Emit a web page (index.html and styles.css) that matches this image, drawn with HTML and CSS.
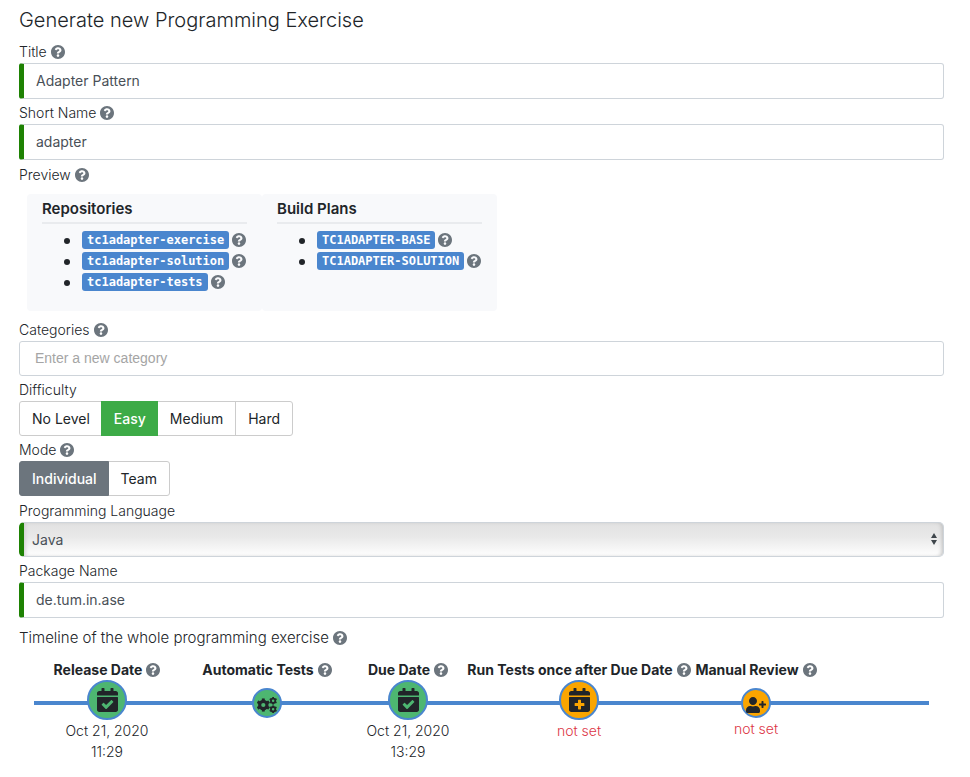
FILE: index.html
```html
<!DOCTYPE html>
<html lang="en">
<head>
<meta charset="utf-8">
<meta name="viewport" content="width=device-width, initial-scale=1">
<title>Generate new Programming Exercise</title>
<link rel="stylesheet" href="styles.css">
</head>
<body>
<svg class="sprite" aria-hidden="true">
  <symbol id="help" viewBox="8 8 496 496"><path d="M504 256c0 136.997-111.043 248-248 248S8 392.997 8 256C8 119.083 119.043 8 256 8s248 111.083 248 248zM262.655 90c-54.497 0-89.255 22.957-116.549 63.758-3.536 5.286-2.353 12.415 2.715 16.258l34.699 26.31c5.205 3.947 12.621 3.008 16.665-2.122 17.864-22.658 30.113-35.797 57.303-35.797 20.429 0 45.698 13.148 45.698 32.958 0 14.976-12.363 22.667-32.534 33.976C247.128 238.528 216 254.941 216 296v4c0 6.627 5.373 12 12 12h56c6.627 0 12-5.373 12-12v-1.333c0-28.462 83.186-29.647 83.186-106.667 0-58.002-60.165-102-116.531-102zM256 338c-25.365 0-46 20.635-46 46 0 25.364 20.635 46 46 46s46-20.636 46-46c0-25.365-20.635-46-46-46z"/></symbol>
  <symbol id="calendar-check" viewBox="0 0 448 512"><path d="M436 160H12c-6.627 0-12-5.373-12-12v-36c0-26.51 21.49-48 48-48h48V12c0-6.627 5.373-12 12-12h40c6.627 0 12 5.373 12 12v52h128V12c0-6.627 5.373-12 12-12h40c6.627 0 12 5.373 12 12v52h48c26.51 0 48 21.49 48 48v36c0 6.627-5.373 12-12 12zM12 192h424c6.627 0 12 5.373 12 12v260c0 26.51-21.49 48-48 48H48c-26.51 0-48-21.49-48-48V204c0-6.627 5.373-12 12-12zm333.296 95.947l-28.169-28.398c-4.667-4.705-12.265-4.736-16.97-.068L194.12 364.665l-45.98-46.352c-4.667-4.705-12.266-4.736-16.971-.068l-28.397 28.17c-4.705 4.667-4.736 12.265-.068 16.97l82.601 83.269c4.667 4.705 12.265 4.736 16.97.068l142.953-141.805c4.705-4.667 4.736-12.265.068-16.97z"/></symbol>
  <symbol id="calendar-plus" viewBox="0 0 448 512"><path fill-rule="evenodd" d="M436 160H12c-6.627 0-12-5.373-12-12v-36c0-26.51 21.49-48 48-48h48V12c0-6.627 5.373-12 12-12h40c6.627 0 12 5.373 12 12v52h128V12c0-6.627 5.373-12 12-12h40c6.627 0 12 5.373 12 12v52h48c26.51 0 48 21.49 48 48v36c0 6.627-5.373 12-12 12zM12 192h424c6.627 0 12 5.373 12 12v260c0 26.51-21.49 48-48 48H48c-26.51 0-48-21.49-48-48V204c0-6.627 5.373-12 12-12zm316 140c0-6.6-5.4-12-12-12h-60v-60c0-6.6-5.4-12-12-12h-40c-6.6 0-12 5.4-12 12v60h-60c-6.6 0-12 5.4-12 12v40c0 6.6 5.4 12 12 12h60v60c0 6.6 5.4 12 12 12h40c6.6 0 12-5.4 12-12v-60h60c6.6 0 12-5.4 12-12z"/></symbol>
  <symbol id="user-plus" viewBox="0 0 640 512"><path d="M624 208h-64v-64c0-8.8-7.2-16-16-16h-32c-8.8 0-16 7.2-16 16v64h-64c-8.8 0-16 7.2-16 16v32c0 8.8 7.2 16 16 16h64v64c0 8.8 7.2 16 16 16h32c8.8 0 16-7.2 16-16v-64h64c8.8 0 16-7.2 16-16v-32c0-8.8-7.2-16-16-16zm-400 48c70.7 0 128-57.3 128-128S294.7 0 224 0 96 57.3 96 128s57.3 128 128 128zm89.6 32h-16.7c-22.2 10.2-46.9 16-72.9 16s-50.6-5.8-72.9-16h-16.7C60.2 288 0 348.2 0 422.4V464c0 26.5 21.5 48 48 48h352c26.5 0 48-21.5 48-48v-41.6c0-74.2-60.2-134.4-134.4-134.4z"/></symbol>
  <symbol id="gear" viewBox="-100 -100 200 200">
    <circle r="54" fill="none" stroke="currentColor" stroke-width="46"/>
    <g fill="currentColor">
      <rect x="-22" y="-98" width="44" height="36" rx="6"/>
      <rect x="-22" y="-98" width="44" height="36" rx="6" transform="rotate(60)"/>
      <rect x="-22" y="-98" width="44" height="36" rx="6" transform="rotate(120)"/>
      <rect x="-22" y="-98" width="44" height="36" rx="6" transform="rotate(180)"/>
      <rect x="-22" y="-98" width="44" height="36" rx="6" transform="rotate(240)"/>
      <rect x="-22" y="-98" width="44" height="36" rx="6" transform="rotate(300)"/>
    </g>
  </symbol>
  <symbol id="cogs" viewBox="0 0 640 512">
    <use href="#gear" x="-16" y="38" width="436" height="436"/>
    <use href="#gear" x="388" y="-6" width="256" height="256"/>
    <use href="#gear" x="388" y="262" width="256" height="256"/>
  </symbol>
</svg>

<main class="page">
  <h1 class="heading">Generate new Programming Exercise</h1>
  <form>
    <div class="group">
      <div class="caption"><label for="title">Title</label><svg class="help" role="img" aria-label="Help"><use href="#help"/></svg></div>
      <input class="control valid" id="title" type="text" value="Adapter Pattern">
    </div>
    <div class="group">
      <div class="caption"><label for="short-name">Short Name</label><svg class="help" role="img" aria-label="Help"><use href="#help"/></svg></div>
      <input class="control valid" id="short-name" type="text" value="adapter">
    </div>
    <section class="group spaced">
      <div class="caption"><span>Preview</span><svg class="help" role="img" aria-label="Help"><use href="#help"/></svg></div>
      <div class="preview">
        <div class="card">
          <h2 class="card-title">Repositories</h2>
          <ul class="items">
            <li><span class="item"><code class="chip">tc1adapter-exercise</code><svg class="help" role="img" aria-label="Help"><use href="#help"/></svg></span></li>
            <li><span class="item"><code class="chip">tc1adapter-solution</code><svg class="help" role="img" aria-label="Help"><use href="#help"/></svg></span></li>
            <li><span class="item"><code class="chip">tc1adapter-tests</code><svg class="help" role="img" aria-label="Help"><use href="#help"/></svg></span></li>
          </ul>
        </div>
        <div class="card">
          <h2 class="card-title">Build Plans</h2>
          <ul class="items">
            <li><span class="item"><code class="chip">TC1ADAPTER-BASE</code><svg class="help" role="img" aria-label="Help"><use href="#help"/></svg></span></li>
            <li><span class="item"><code class="chip">TC1ADAPTER-SOLUTION</code><svg class="help" role="img" aria-label="Help"><use href="#help"/></svg></span></li>
          </ul>
        </div>
      </div>
    </section>
    <div class="group">
      <div class="caption"><label for="categories">Categories</label><svg class="help" role="img" aria-label="Help"><use href="#help"/></svg></div>
      <input class="control plain" id="categories" type="text" placeholder="Enter a new category">
    </div>
    <div class="group" role="radiogroup" aria-labelledby="difficulty">
      <div class="caption"><span id="difficulty">Difficulty</span></div>
      <div class="segments easy">
        <label class="segment"><input type="radio" name="difficulty">No Level</label>
        <label class="segment"><input type="radio" name="difficulty" checked>Easy</label>
        <label class="segment"><input type="radio" name="difficulty">Medium</label>
        <label class="segment"><input type="radio" name="difficulty">Hard</label>
      </div>
    </div>
    <div class="group" role="radiogroup" aria-labelledby="mode">
      <div class="caption"><span id="mode">Mode</span><svg class="help" role="img" aria-label="Help"><use href="#help"/></svg></div>
      <div class="segments">
        <label class="segment"><input type="radio" name="mode" checked>Individual</label>
        <label class="segment"><input type="radio" name="mode">Team</label>
      </div>
    </div>
    <div class="group spaced">
      <div class="caption"><label for="language">Programming Language</label></div>
      <div class="select-wrap">
        <select class="control valid select" id="language"><option>Java</option></select>
        <svg class="arrows" viewBox="0 0 8 14" aria-hidden="true"><path d="M1 6l3-5 3 5zM1 8l3 5 3-5z"/></svg>
      </div>
    </div>
    <div class="group">
      <div class="caption"><label for="package">Package Name</label></div>
      <input class="control valid" id="package" type="text" value="de.tum.in.ase">
    </div>
    <section class="schedule">
      <div class="caption large"><span>Timeline of the whole programming exercise</span><svg class="help" role="img" aria-label="Help"><use href="#help"/></svg></div>
      <div class="timeline">
        <div class="step">
          <div class="step-title">Release Date<svg class="help" role="img" aria-label="Help"><use href="#help"/></svg></div>
          <button class="node" type="button" aria-label="Release Date"><svg class="calendar"><use href="#calendar-check"/></svg></button>
          <div>Oct 21, 2020<br>11:29</div>
        </div>
        <div class="step">
          <div class="step-title">Automatic Tests<svg class="help" role="img" aria-label="Help"><use href="#help"/></svg></div>
          <button class="node small" type="button" aria-label="Automatic Tests"><svg class="wide"><use href="#cogs"/></svg></button>
        </div>
        <div class="step">
          <div class="step-title">Due Date<svg class="help" role="img" aria-label="Help"><use href="#help"/></svg></div>
          <button class="node" type="button" aria-label="Due Date"><svg class="calendar"><use href="#calendar-check"/></svg></button>
          <div>Oct 21, 2020<br>13:29</div>
        </div>
        <div class="step">
          <div class="step-title">Run Tests once after Due Date<svg class="help" role="img" aria-label="Help"><use href="#help"/></svg></div>
          <button class="node unset" type="button" aria-label="Run Tests once after Due Date"><svg class="calendar"><use href="#calendar-plus"/></svg></button>
          <div class="missing">not set</div>
        </div>
        <div class="step">
          <div class="step-title">Manual Review<svg class="help" role="img" aria-label="Help"><use href="#help"/></svg></div>
          <button class="node small unset" type="button" aria-label="Manual Review"><svg class="wide"><use href="#user-plus"/></svg></button>
          <div class="missing">not set</div>
        </div>
      </div>
    </section>
  </form>
</main>
</body>
</html>
```
FILE: styles.css
```css
* { box-sizing: border-box; }

body {
  margin: 0;
  background: #fff;
  color: #212529;
  font: 300 14px/21px Inter, "Liberation Sans", sans-serif;
}

.sprite { position: absolute; width: 0; height: 0; }

.page { padding: 8px 26px 12px 19px; }

.heading { margin: 0 0 8px; font-size: 20px; font-weight: 300; line-height: 25px; }

.group { margin-bottom: 3px; }
.spaced { padding-top: 1px; }

.caption { display: flex; align-items: center; gap: 4px; margin-bottom: 1px; }
.large { font-size: 15px; }

.help { flex: none; width: 14px; height: 14px; fill: #6c757d; }

.control {
  display: block;
  width: 100%;
  height: 36px;
  padding: 0 12px 1px;
  border: 1px solid #ced4da;
  border-radius: 3px;
  background: #fff;
  color: #495057;
  font: 400 14px/21px Inter, "Liberation Sans", sans-serif;
}
.valid { border-left: 5px solid #1e8203; }
.plain { height: 35px; padding: 0 15px 1px; font-family: "Liberation Sans", sans-serif; }
.control::placeholder { color: #a5a5a5; opacity: 1; }

.preview { display: flex; margin: 9px 8px 8px; }
.card {
  width: 235px;
  height: 117px;
  padding: 4px 15px 15px;
  border-radius: 4px;
  background: #f8f9fb;
}
.card-title {
  margin: 0 0 5px;
  padding-bottom: 3px;
  border-bottom: 2px solid #e9ebee;
  font-size: 15px;
  font-weight: 600;
  line-height: 21px;
}
.items { margin: 0; padding-left: 40px; }
.items li { height: 21px; font-size: 18px; }
.item { display: inline-flex; align-items: center; gap: 3px; height: 21px; vertical-align: top; }
.chip {
  padding: 2px 5px 1px;
  border-radius: 3px;
  background: #4a86ce;
  color: #fff;
  font: 700 12px/15px "DejaVu Sans Mono", monospace;
}

.segments { display: flex; }
.segment {
  position: relative;
  height: 35px;
  padding: 0 12px;
  border: 1px solid #ccc;
  color: #212529;
  font-weight: 400;
  line-height: 33px;
  cursor: pointer;
}
.segment + .segment { margin-left: -1px; }
.segment:first-child { padding-right: 11px; border-radius: 3px 0 0 3px; }
.segment:last-child { border-radius: 0 3px 3px 0; }
.segment input { position: absolute; inset: 0; margin: 0; opacity: 0; }
.segment:has(:checked) { z-index: 1; padding-right: 11px; border-color: #6c757d; background: #6c757d; color: #fff; font-weight: 500; }
.easy .segment:has(:checked) { border-color: #3dab47; background: #3dab47; }

.select-wrap { position: relative; }
.select {
  appearance: none;
  height: 35px;
  padding: 0 8px;
  border-radius: 5px;
  background: linear-gradient(#e2e2e2, #e8e8e8 40%, #fefefe);
  box-shadow: inset -3px 0 4px -2px #bbb, inset 3px 0 4px -2px #ccc;
}
.arrows { position: absolute; top: 10px; right: 6px; width: 8px; height: 14px; fill: #3f464c; pointer-events: none; }

.schedule { padding-top: 6px; }
.timeline {
  position: relative;
  display: grid;
  grid-template-columns: 146fr 174fr 108fr 234fr 120fr 113fr;
  margin: 11px 15px 0;
}
.timeline::before {
  content: "";
  position: absolute;
  top: 42px;
  left: 0;
  right: 0;
  height: 4px;
  background: #4a86ce;
}
.step { position: relative; display: flex; flex-direction: column; align-items: center; min-width: 0; text-align: center; white-space: nowrap; }
.step-title { display: flex; align-items: center; gap: 4px; font-weight: 700; }
.node {
  display: grid;
  place-items: center;
  width: 40px;
  height: 40px;
  padding: 0;
  border: 2px solid #4a86ce;
  border-radius: 50%;
  background: #4db671;
  color: #212529;
}
.node svg { fill: currentColor; }
.small { width: 30px; height: 30px; margin-top: 8px; padding-top: 3px; }
.unset { background: #faa500; }
.calendar { width: 21px; height: 24px; }
.wide { width: 20px; height: 16px; }
.missing { color: #dc3545; }
```
